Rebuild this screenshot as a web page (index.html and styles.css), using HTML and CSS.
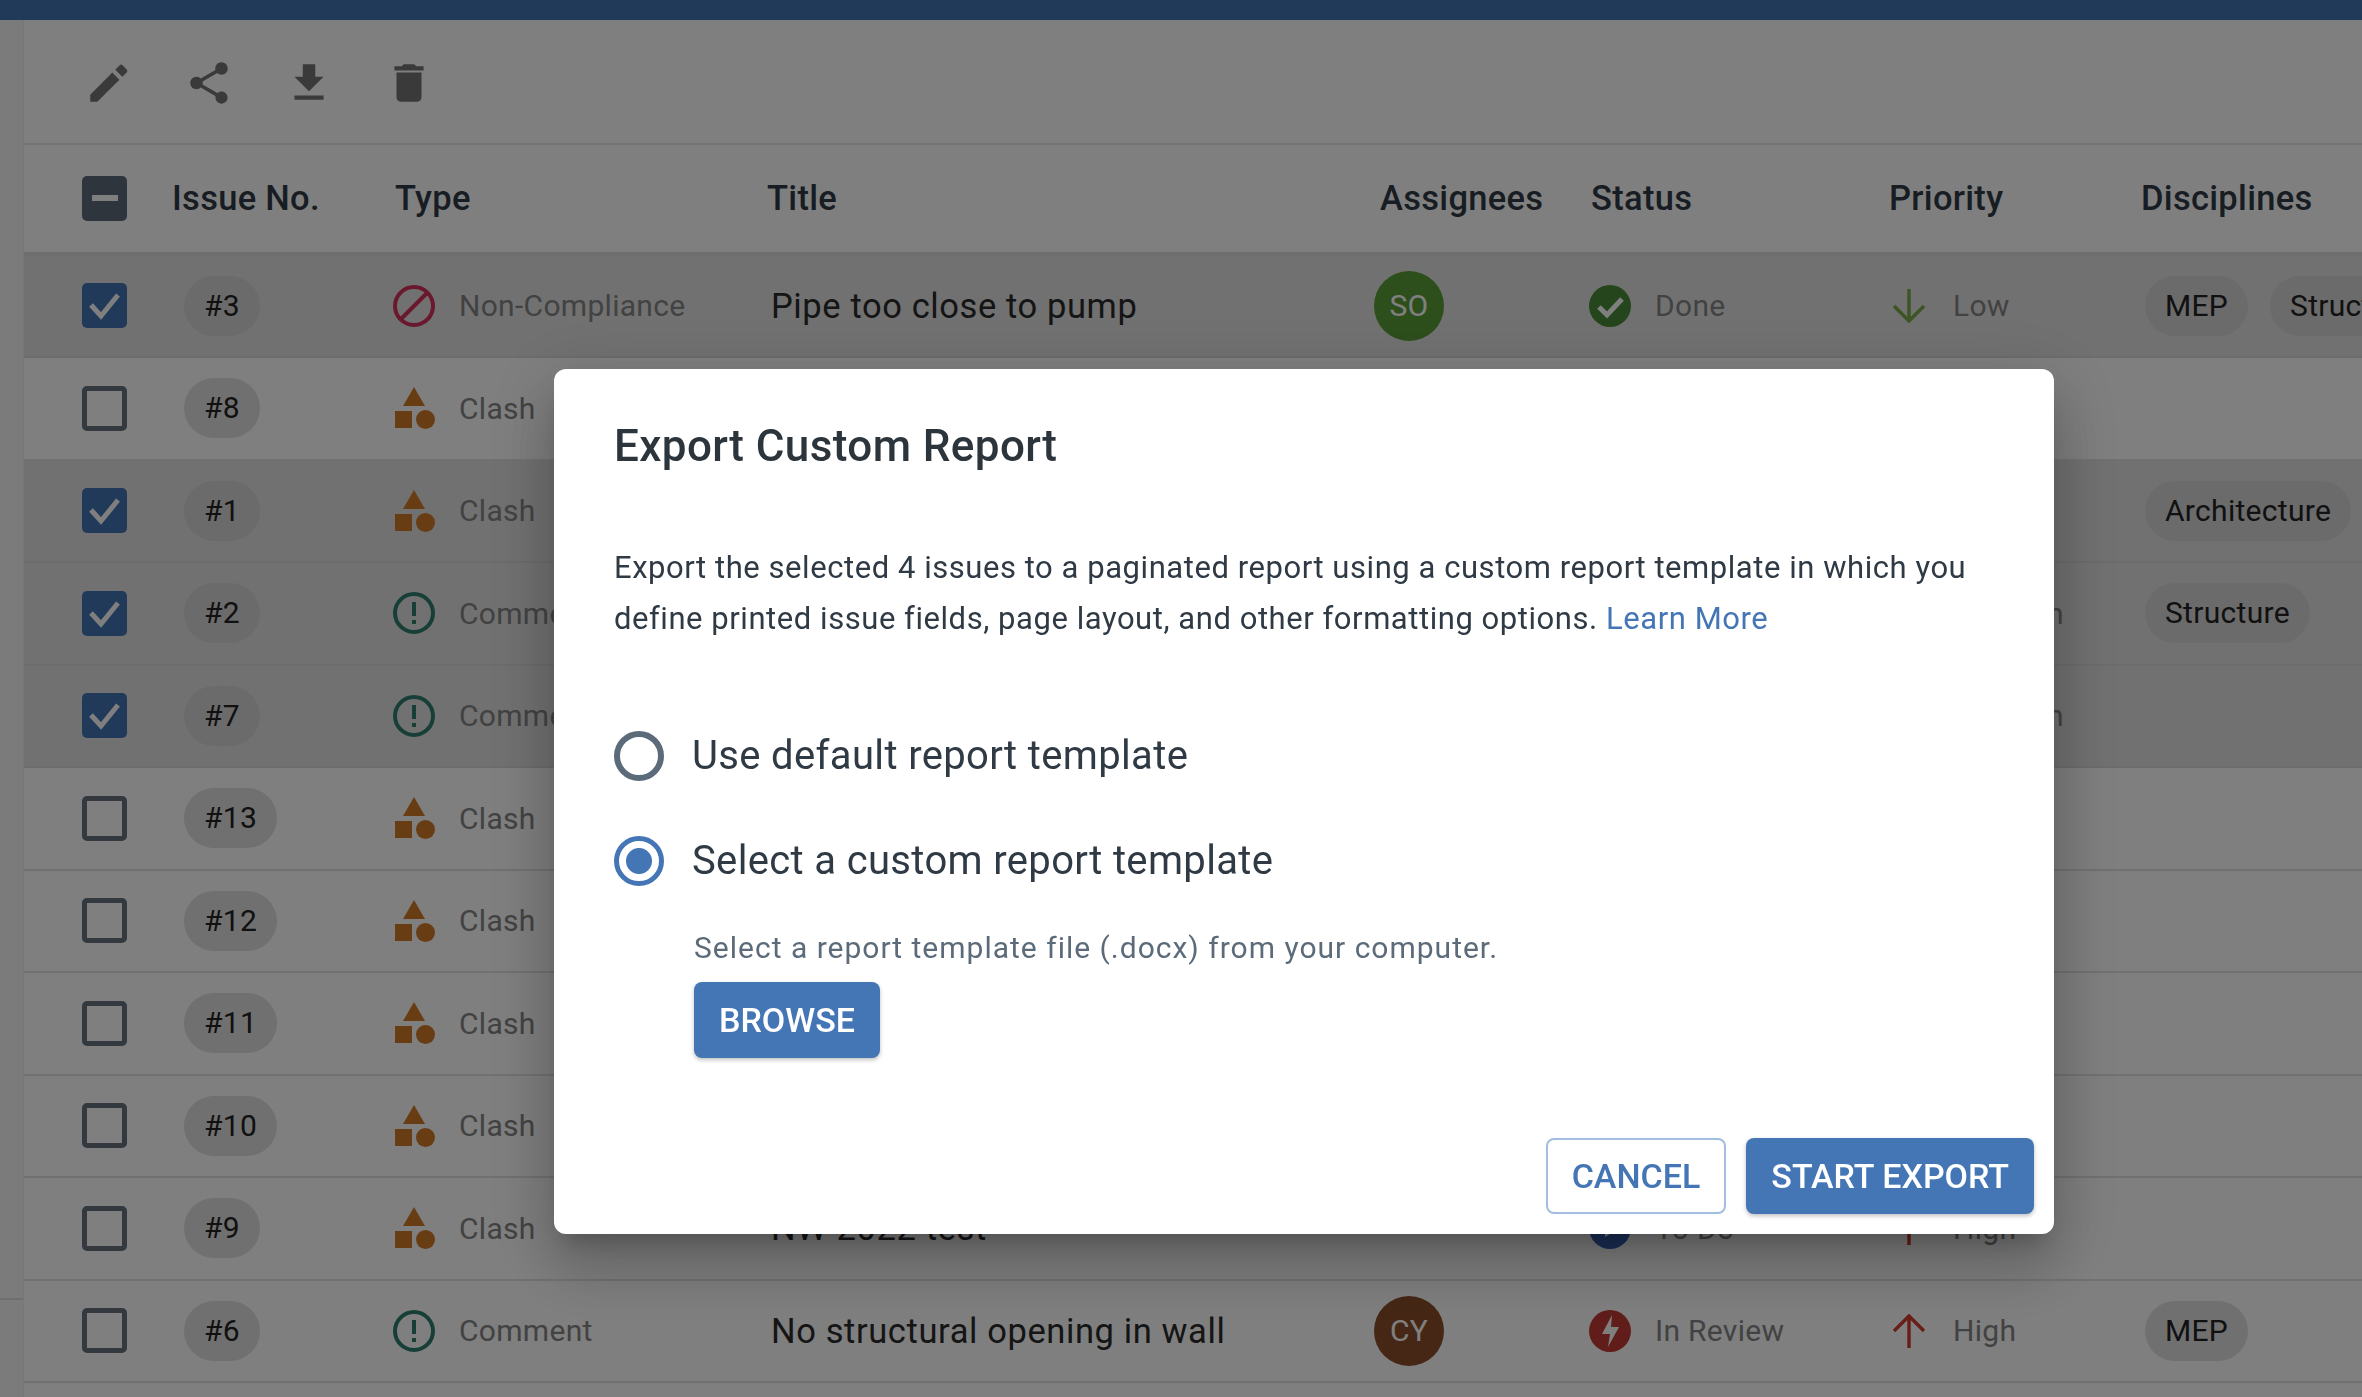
FILE: index.html
```html
<!DOCTYPE html>
<html lang="en">
<head>
    <meta charset="UTF-8">
    <title>Issues</title>
    <link rel="stylesheet" href="styles.css">
</head>
<body>
    <svg class="sprites" width="0" height="0">
        <symbol id="i-block" viewBox="0 0 42 42"><circle cx="21" cy="21" r="19" fill="none" stroke="currentColor" stroke-width="4"/><path d="M8 34 34 8" stroke="currentColor" stroke-width="4"/></symbol>
        <symbol id="i-clash" viewBox="0 0 42 42"><path d="M21 0 32 19H10z" fill="currentColor"/><rect x="2" y="24" width="17" height="17" fill="currentColor"/><circle cx="32.5" cy="32.5" r="9.5" fill="currentColor"/></symbol>
        <symbol id="i-comment" viewBox="0 0 42 42"><circle cx="21" cy="21" r="19" fill="none" stroke="currentColor" stroke-width="4"/><rect x="19" y="10" width="4" height="14" fill="currentColor"/><rect x="19" y="28" width="4" height="4" fill="currentColor"/></symbol>
        <symbol id="i-done" viewBox="0 0 42 42"><circle cx="21" cy="21" r="21" fill="currentColor"/><path d="M10 22l8 8 15-16" fill="none" stroke="#fff" stroke-width="5"/></symbol>
        <symbol id="i-review" viewBox="0 0 42 42"><circle cx="21" cy="21" r="21" fill="currentColor"/><path d="M23 5 13 24h8l-2 13 11-20h-8z" fill="#fff"/></symbol>
        <symbol id="i-todo" viewBox="0 0 42 42"><circle cx="21" cy="21" r="21" fill="currentColor"/><path d="M16 12 31 21 16 30z" fill="#fff"/></symbol>
        <symbol id="i-down" viewBox="0 0 34 34"><path d="M17 0V32M2 17 17 32 32 17" fill="none" stroke="currentColor" stroke-width="3.4"/></symbol>
        <symbol id="i-up" viewBox="0 0 34 34"><path d="M17 34V2M2 17 17 2 32 17" fill="none" stroke="currentColor" stroke-width="3.4"/></symbol>
        <symbol id="i-medium" viewBox="0 0 34 34"><path d="M3 12H31M3 22H31" fill="none" stroke="currentColor" stroke-width="3.4"/></symbol>
        <symbol id="i-check" viewBox="0 0 45 45"><path d="M9 22l10 11L36 12" fill="none" stroke="#fff" stroke-width="5"/></symbol>
    </svg>

    <div class="topbar"></div>
    <div class="app">
        <aside class="side"><div class="side-top"></div></aside>
        <main class="content">
            <div class="toolbar">
                <svg class="tool" viewBox="0 0 24 24"><path d="M3 17.6V21h3.4L17 10.4 13.6 7zM15 5.6l2.100-2.100a1 1 0 0 1 1.400 0l2 2a1 1 0 0 1 0 1.400L18.400 9z"/></svg>
                <svg class="tool" viewBox="0 0 24 24"><path d="M18 16.08c-.76 0-1.44.3-1.96.77L8.91 12.7c.05-.23.09-.46.09-.7s-.04-.47-.09-.7l7.05-4.11c.54.5 1.25.81 2.04.81 1.66 0 3-1.34 3-3s-1.34-3-3-3-3 1.34-3 3c0 .24.04.47.09.7L8.04 9.81C7.5 9.31 6.79 9 6 9c-1.66 0-3 1.34-3 3s1.34 3 3 3c.79 0 1.5-.31 2.04-.81l7.12 4.16c-.05.21-.08.43-.08.65 0 1.61 1.31 2.92 2.92 2.92s2.92-1.31 2.92-2.92-1.31-2.92-2.92-2.92z"/></svg>
                <svg class="tool" viewBox="0 0 24 24"><path d="M19 9h-4V3H9v6H5l7 7 7-7zM5 18v2h14v-2H5z"/></svg>
                <svg class="tool" viewBox="0 0 24 24"><path d="M6 19c0 1.100.9 2 2 2h8c1.100 0 2-.9 2-2V7H6v12zM19 4h-3.500l-1-1h-5l-1 1H5v2h14V4z"/></svg>
            </div>

            <div class="row head">
                <div class="check minus"><span></span></div>
                <div>Issue No.</div>
                <div>Type</div>
                <div>Title</div>
                <div>Assignees</div>
                <div>Status</div>
                <div>Priority</div>
                <div>Disciplines</div>
            </div>

            <div class="row selected">
                <div class="check on"><svg><use href="#i-check"/></svg></div>
                <div class="no"><span class="chip">#3</span></div>
                <div class="cell"><svg class="ic t-block"><use href="#i-block"/></svg><span class="muted">Non-Compliance</span></div>
                <div class="title">Pipe too close to pump</div>
                <div class="who"><span class="avatar green">SO</span></div>
                <div class="cell"><svg class="ic s-done"><use href="#i-done"/></svg><span class="muted">Done</span></div>
                <div class="cell"><svg class="arrow p-low"><use href="#i-down"/></svg><span class="muted">Low</span></div>
                <div class="disc"><span class="chip">MEP</span><span class="chip">Structure</span></div>
            </div>
            <div class="row">
                <div class="check"></div>
                <div class="no"><span class="chip">#8</span></div>
                <div class="cell"><svg class="ic t-clash"><use href="#i-clash"/></svg><span class="muted">Clash</span></div>
                <div></div><div></div><div></div><div></div><div></div>
            </div>
            <div class="row selected">
                <div class="check on"><svg><use href="#i-check"/></svg></div>
                <div class="no"><span class="chip">#1</span></div>
                <div class="cell"><svg class="ic t-clash"><use href="#i-clash"/></svg><span class="muted">Clash</span></div>
                <div></div><div></div><div></div><div></div>
                <div class="disc"><span class="chip">Architecture</span></div>
            </div>
            <div class="row selected">
                <div class="check on"><svg><use href="#i-check"/></svg></div>
                <div class="no"><span class="chip">#2</span></div>
                <div class="cell"><svg class="ic t-comment"><use href="#i-comment"/></svg><span class="muted">Comment</span></div>
                <div></div><div></div><div></div>
                <div class="cell"><svg class="arrow"><use href="#i-medium"/></svg><span class="muted">Medium</span></div>
                <div class="disc"><span class="chip">Structure</span></div>
            </div>
            <div class="row selected">
                <div class="check on"><svg><use href="#i-check"/></svg></div>
                <div class="no"><span class="chip">#7</span></div>
                <div class="cell"><svg class="ic t-comment"><use href="#i-comment"/></svg><span class="muted">Comment</span></div>
                <div></div><div></div><div></div>
                <div class="cell"><svg class="arrow"><use href="#i-medium"/></svg><span class="muted">Medium</span></div>
                <div></div>
            </div>
            <div class="row">
                <div class="check"></div>
                <div class="no"><span class="chip">#13</span></div>
                <div class="cell"><svg class="ic t-clash"><use href="#i-clash"/></svg><span class="muted">Clash</span></div>
                <div></div><div></div><div></div><div></div><div></div>
            </div>
            <div class="row">
                <div class="check"></div>
                <div class="no"><span class="chip">#12</span></div>
                <div class="cell"><svg class="ic t-clash"><use href="#i-clash"/></svg><span class="muted">Clash</span></div>
                <div></div><div></div><div></div><div></div><div></div>
            </div>
            <div class="row">
                <div class="check"></div>
                <div class="no"><span class="chip">#11</span></div>
                <div class="cell"><svg class="ic t-clash"><use href="#i-clash"/></svg><span class="muted">Clash</span></div>
                <div></div><div></div><div></div><div></div><div></div>
            </div>
            <div class="row">
                <div class="check"></div>
                <div class="no"><span class="chip">#10</span></div>
                <div class="cell"><svg class="ic t-clash"><use href="#i-clash"/></svg><span class="muted">Clash</span></div>
                <div></div><div></div><div></div><div></div><div></div>
            </div>
            <div class="row">
                <div class="check"></div>
                <div class="no"><span class="chip">#9</span></div>
                <div class="cell"><svg class="ic t-clash"><use href="#i-clash"/></svg><span class="muted">Clash</span></div>
                <div class="title">NW 2022 test</div>
                <div></div>
                <div class="cell"><svg class="ic s-todo"><use href="#i-todo"/></svg><span class="muted">To Do</span></div>
                <div class="cell"><svg class="arrow p-high"><use href="#i-up"/></svg><span class="muted">High</span></div>
                <div></div>
            </div>
            <div class="row">
                <div class="check"></div>
                <div class="no"><span class="chip">#6</span></div>
                <div class="cell"><svg class="ic t-comment"><use href="#i-comment"/></svg><span class="muted">Comment</span></div>
                <div class="title">No structural opening in wall</div>
                <div class="who"><span class="avatar brown">CY</span></div>
                <div class="cell"><svg class="ic s-review"><use href="#i-review"/></svg><span class="muted">In Review</span></div>
                <div class="cell"><svg class="arrow p-high"><use href="#i-up"/></svg><span class="muted">High</span></div>
                <div class="disc"><span class="chip">MEP</span></div>
            </div>
        </main>
    </div>

    <div class="backdrop">
        <div class="dialog">
            <h2>Export Custom Report</h2>
            <p class="intro">Export the selected 4 issues to a paginated report using a custom report template in which you define printed issue fields, page layout, and other formatting options. <a href="#">Learn More</a></p>
            <div class="option"><span class="radio"></span>Use default report template</div>
            <div class="option"><span class="radio active"></span>Select a custom report template</div>
            <div class="picker">
                <p>Select a report template file (.docx) from your computer.</p>
                <button class="btn primary">BROWSE</button>
            </div>
            <div class="actions">
                <button class="btn outline">CANCEL</button>
                <button class="btn primary">START EXPORT</button>
            </div>
        </div>
    </div>
</body>
</html>
```

FILE: styles.css
```css
* {
    box-sizing: border-box;
}

html, body {
    height: 100%;
}

body {
    margin: 0;
    overflow: hidden;
    font-family: Roboto, "Noto Sans", sans-serif;
    background: #fff;
    color: #2f3a45;
}

.sprites {
    position: absolute;
}

.topbar {
    height: 20px;
    background: #4475b5;
}

.app {
    display: flex;
    height: 1377px;
}

.side {
    width: 24px;
    flex: none;
    background: #f6f6f6;
    border-right: 1px solid #eee;
}

.side-top {
    height: 1280px;
    border-bottom: 2px solid #dcdcdc;
}

.content {
    flex: 1;
    min-width: 0;
    overflow: hidden;
}

.toolbar {
    height: 125px;
    display: flex;
    align-items: flex-start;
    gap: 50px;
    padding: 38px 0 0 60px;
    border-bottom: 2px solid #e8e8e8;
}

.tool {
    width: 50px;
    height: 50px;
    fill: #757575;
}

/* table rows share one grid */
.row {
    display: grid;
    grid-template-columns: 90px 223px 372px 613px 211px 298px 252px 400px;
    align-items: center;
    height: 102.5px;
    padding-left: 58px;
    border-bottom: 2px solid #e3e3e3;
    font-size: 30px;
    letter-spacing: 0.3px;
    white-space: nowrap;
}

.row.head {
    height: 110.5px;
    border-bottom: 4px solid #dcdcdc;
    font-size: 34.5px;
    font-weight: 500;
    color: #2f3a45;
}

.row.selected {
    background: #e3e3e3;
    border-bottom-color: #d8d8d8;
}

.check {
    width: 45px;
    height: 45px;
    border: 5px solid #66727e;
    border-radius: 5px;
}

.check.on {
    background: #4475b5;
    border: 0;
}

.check.on svg {
    display: block;
    width: 45px;
    height: 45px;
}

.check.minus {
    background: #5c6b7a;
    border: 0;
    display: flex;
    align-items: center;
    justify-content: center;
}

.check.minus span {
    width: 26px;
    height: 6px;
    background: #fff;
}

.no {
    padding-left: 12px;
}

.chip {
    display: inline-block;
    height: 60px;
    line-height: 60px;
    padding: 0 20px;
    border-radius: 30px;
    background: #e0e0e0;
    color: #222;
}

.selected .chip {
    background: #d6d6d6;
}

.cell {
    display: flex;
    align-items: center;
    margin-left: -2px;
}

.ic {
    width: 42px;
    height: 42px;
    flex: none;
    margin-right: 24px;
}

.arrow {
    width: 34px;
    height: 34px;
    flex: none;
    margin: 0 27px 0 5px;
}

.muted {
    color: #858585;
}

.title {
    padding-left: 4px;
    color: #2a2a2a;
    font-size: 34.5px;
    letter-spacing: 0.6px;
}

.who {
    margin-left: -6px;
}

.avatar {
    display: flex;
    align-items: center;
    justify-content: center;
    width: 70px;
    height: 70px;
    border-radius: 50%;
    color: #fff;
}

.green { background: #5a9e38; }
.brown { background: #8c4e2c; }

.t-block { color: #d4305a; }
.t-clash { color: #d07a28; }
.t-comment { color: #2f7f70; }
.s-done { color: #4a8a3a; }
.s-review { color: #c03a32; }
.s-todo { color: #3460b0; }
.p-low { color: #7aa848; }
.p-high { color: #d03a2e; }

.disc {
    display: flex;
    gap: 22px;
    padding-left: 4px;
}

/* modal */
.backdrop {
    position: fixed;
    inset: 0;
    background: rgba(0, 0, 0, 0.5);
}

.dialog {
    position: absolute;
    left: 554px;
    top: 369px;
    width: 1500px;
    height: 865px;
    padding: 0 20px 0 60px;
    background: #fff;
    border-radius: 12px;
    box-shadow: 0 17px 23px -10px rgba(0, 0, 0, 0.2), 0 36px 57px 5px rgba(0, 0, 0, 0.14), 0 14px 69px 12px rgba(0, 0, 0, 0.12);
    display: flex;
    flex-direction: column;
}

.dialog h2 {
    margin: 50px 0 0;
    font-size: 44px;
    line-height: 54px;
    font-weight: 500;
    letter-spacing: 0.4px;
    color: #2c343c;
}

.intro {
    margin: 69px 20px 0 0;
    font-size: 31px;
    line-height: 51px;
    letter-spacing: 0.55px;
    color: #2f3a45;
}

.intro a {
    color: #4475b5;
    text-decoration: none;
}

.option {
    display: flex;
    align-items: center;
    height: 105px;
    gap: 28px;
    font-size: 40px;
    letter-spacing: 0.35px;
    color: #2f3a45;
}

.intro + .option {
    margin-top: 59px;
}

.radio {
    width: 50px;
    height: 50px;
    border: 6px solid #5c6b7a;
    border-radius: 50%;
}

.radio.active {
    border: 5px solid #4475b5;
    background: radial-gradient(circle, #4475b5 0 12.5px, #fff 13.5px);
}

.picker {
    padding-left: 80px;
}

.picker p {
    margin: 15px 0 0;
    font-size: 30px;
    line-height: 40px;
    letter-spacing: 1px;
    color: #5c6b7a;
}

.btn {
    height: 76px;
    padding: 0 25px;
    border-radius: 8px;
    border: 0;
    font-family: inherit;
    font-size: 34px;
    font-weight: 500;
}

.picker .btn {
    margin-top: 13.5px;
}

.primary {
    background: #4475b5;
    color: #fff;
    box-shadow: 0 2px 4px rgba(0, 0, 0, 0.25);
}

.outline {
    padding: 0 24px;
    background: #fff;
    color: #4475b5;
    border: 2px solid #a2bddf;
}

.actions {
    margin-top: auto;
    margin-bottom: 20px;
    display: flex;
    justify-content: flex-end;
    gap: 20px;
}
```
